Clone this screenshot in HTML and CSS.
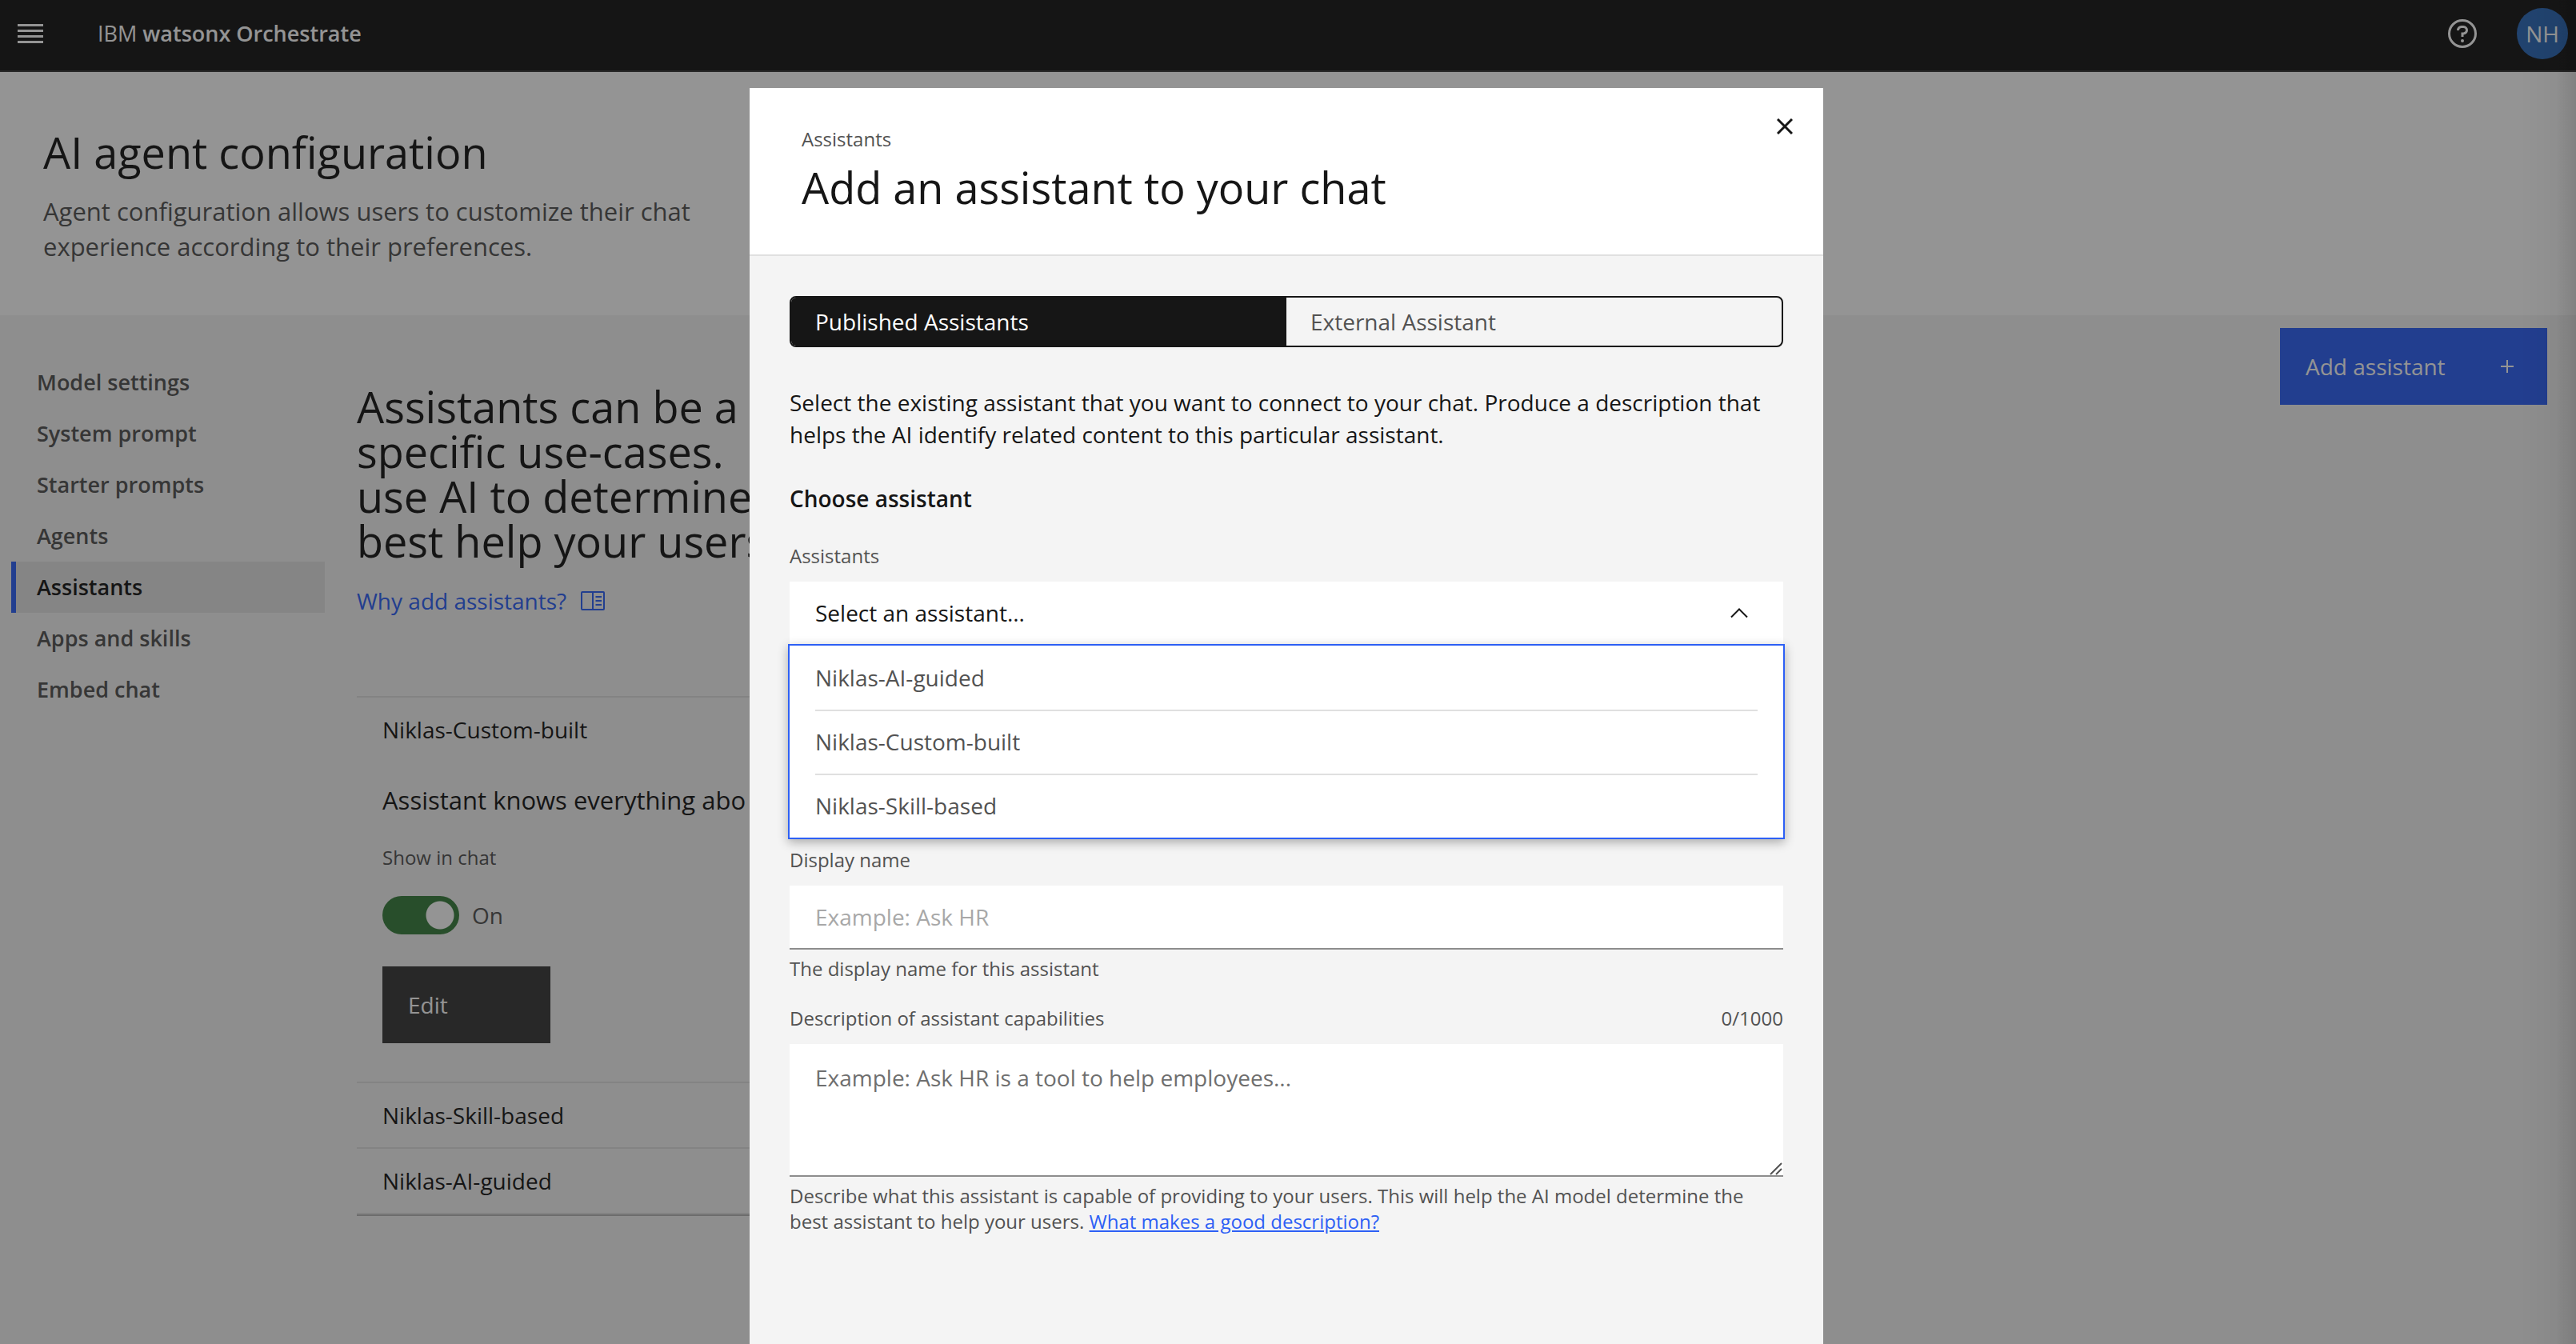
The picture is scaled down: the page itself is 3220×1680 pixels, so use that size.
FILE: index.html
```
<!DOCTYPE html>
<html lang="en">
<head>
<meta charset="utf-8">
<meta name="viewport" content="width=device-width, initial-scale=1">
<title>IBM watsonx Orchestrate</title>
<link rel="stylesheet" href="styles.css">
</head>
<body>
<header class="topbar">
  <button class="icon-button" type="button" aria-label="Open menu">
    <svg width="32" height="24" viewBox="0 0 32 24" fill="currentColor" aria-hidden="true"><path d="M0 0h32v3H0zM0 7h32v3H0zM0 14h32v3H0zM0 21h32v3H0z"/></svg>
  </button>
  <p class="brand">IBM <strong>watsonx Orchestrate</strong></p>
  <button class="icon-button help" type="button" aria-label="Help">
    <svg width="36" height="36" viewBox="0 0 36 36" fill="none" stroke="currentColor" stroke-width="3" aria-hidden="true"><circle cx="18" cy="18" r="16.5"/><path d="M12.5 14v-.6A4.2 4.2 0 0 1 16.700 9.500h2.600a4.200 4.200 0 0 1 4.200 4.200a4.200 4.200 0 0 1-4.200 4.200H18v4"/><circle cx="18" cy="27" r="2" fill="currentColor" stroke="none"/></svg>
  </button>
  <button class="avatar" type="button">NH</button>
</header>

<section class="hero">
  <h1 class="display">AI agent configuration</h1>
  <p class="hero-text">Agent configuration allows users to customize their chat experience according to their preferences.</p>
</section>

<div class="workspace">
  <nav class="sidenav" aria-label="Agent configuration">
    <a class="sidenav-link" href="#model">Model settings</a>
    <a class="sidenav-link" href="#system">System prompt</a>
    <a class="sidenav-link" href="#starter">Starter prompts</a>
    <a class="sidenav-link" href="#agents">Agents</a>
    <a class="sidenav-link active" href="#assistants" aria-current="page">Assistants</a>
    <a class="sidenav-link" href="#apps">Apps and skills</a>
    <a class="sidenav-link" href="#embed">Embed chat</a>
  </nav>

  <main class="content">
    <h2 class="display lead">Assistants can be a<br>specific use-cases.<br>use AI to determine<br>best help your users</h2>
    <a class="why" href="#why">Why add assistants?
      <svg width="30" height="24" viewBox="0 0 30 24" fill="none" stroke="currentColor" stroke-width="2" aria-hidden="true"><rect x="1" y="1" width="28" height="22" rx="1"/><path d="M15 1v22M18.500 7H26M18.500 12H26M18.500 17H26"/></svg>
    </a>

    <div class="accordion">
      <section class="accordion-item">
        <button class="accordion-title" type="button" aria-expanded="true">Niklas-Custom-built</button>
        <div class="panel">
          <p class="panel-text">Assistant knows everything abo</p>
          <label class="label" for="show">Show in chat</label>
          <div class="switch-row">
            <input class="switch" id="show" type="checkbox" role="switch" checked>
            <span>On</span>
          </div>
          <button class="edit" type="button">Edit</button>
        </div>
      </section>
      <section class="accordion-item">
        <button class="accordion-title" type="button" aria-expanded="false">Niklas-Skill-based</button>
      </section>
      <section class="accordion-item">
        <button class="accordion-title" type="button" aria-expanded="false">Niklas-AI-guided</button>
      </section>
    </div>
  </main>

  <button class="add" type="button">Add assistant
    <svg width="16" height="16" viewBox="0 0 16 16" stroke="currentColor" stroke-width="2" aria-hidden="true"><path d="M8 0v16M0 8h16"/></svg>
  </button>
</div>

<div class="backdrop">
  <div class="modal" role="dialog" aria-modal="true" aria-labelledby="modal-title">
    <header class="modal-header">
      <div>
        <p class="label">Assistants</p>
        <h2 class="display modal-title" id="modal-title">Add an assistant to your chat</h2>
      </div>
      <button class="close" type="button" aria-label="Close">
        <svg width="20" height="20" viewBox="0 0 20 20" stroke="currentColor" stroke-width="3" aria-hidden="true"><path d="M1 1l18 18M19 1L1 19"/></svg>
      </button>
    </header>

    <form class="modal-body">
      <div class="switcher" role="tablist">
        <button class="tab selected" type="button" role="tab" aria-selected="true">Published Assistants</button>
        <button class="tab" type="button" role="tab" aria-selected="false">External Assistant</button>
      </div>

      <p class="intro">Select the existing assistant that you want to connect to your chat. Produce a description that helps the AI identify related content to this particular assistant.</p>

      <h3 class="section-title">Choose assistant</h3>

      <label class="label" for="assistant">Assistants</label>
      <button class="field dropdown" id="assistant" type="button" role="combobox" aria-haspopup="listbox" aria-expanded="true" aria-controls="assistant-list">Select an assistant...
        <svg width="22" height="14" viewBox="0 0 22 14" fill="none" stroke="currentColor" stroke-width="2" aria-hidden="true"><path d="M1 12.500L11 2.500l10 10"/></svg>
      </button>
      <ul class="menu" id="assistant-list" role="listbox">
        <li class="option" role="option">Niklas-AI-guided</li>
        <li class="option" role="option">Niklas-Custom-built</li>
        <li class="option" role="option">Niklas-Skill-based</li>
      </ul>

      <label class="label" for="name">Display name</label>
      <input class="field text" id="name" type="text" placeholder="Example: Ask HR">
      <p class="helper">The display name for this assistant</p>

      <div class="label-row">
        <label class="label" for="description">Description of assistant capabilities</label>
        <span class="label">0/1000</span>
      </div>
      <div class="area-wrap">
        <textarea class="field area" id="description" placeholder="Example: Ask HR is a tool to help employees..."></textarea>
        <svg class="grip" width="16" height="16" viewBox="0 0 16 16" stroke="currentColor" stroke-width="2" aria-hidden="true"><path d="M1 15L15 1M8 15l7-7"/></svg>
      </div>
      <p class="helper">Describe what this assistant is capable of providing to your users. This will help the AI model determine the best assistant to help your users. <a class="link" href="#good">What makes a good description?</a></p>
    </form>
  </div>
</div>
</body>
</html>
```
FILE: styles.css
```
:root {
  --ink: #161616;
  --ink-2: #525252;
  --line: #e0e0e0;
  --layer: #f4f4f4;
  --blue: #2d60f5;
}

* { box-sizing: border-box; margin: 0; padding: 0; }

body {
  min-height: 100vh;
  background: var(--layer);
  color: var(--ink);
  font: 28px/40px "Open Sans", "Noto Sans", sans-serif;
}

button, input, textarea {
  border: 0;
  border-radius: 0;
  background: none;
  color: inherit;
  font: inherit;
  text-align: left;
}

a { color: var(--blue); text-decoration: none; }

svg { display: block; flex: none; }

.display { font-size: 54px; font-weight: 400; line-height: 64px; }

.label, .helper { color: var(--ink-2); font-size: 24px; line-height: 32px; }

/* Top bar */
.topbar {
  display: flex;
  align-items: center;
  height: 90px;
  padding: 0 10px 4px 22px;
  border-bottom: 2px solid #393939;
  background: var(--ink);
  color: #fff;
}

.icon-button { display: flex; }
.brand { flex: 1; padding-left: 68px; font-size: 27px; }
.brand strong { font-weight: 600; }
.help { margin-right: 50px; }

.avatar {
  width: 64px;
  height: 64px;
  border-radius: 50%;
  background: #2b6abb;
  text-align: center;
}

/* Page heading */
.hero { padding: 68px 54px 64px; background: #fff; }

.hero-text {
  max-width: 860px;
  margin-top: 20px;
  color: var(--ink-2);
  font-size: 31px;
  line-height: 44px;
}

/* Navigation and content */
.workspace { display: flex; align-items: flex-start; padding: 16px 36px 0 14px; }

.sidenav { flex: none; width: 392px; padding-top: 36px; }

.sidenav-link {
  display: block;
  padding: 12px 26px;
  border-left: 6px solid transparent;
  color: var(--ink-2);
  font-size: 27px;
  font-weight: 600;
}

.sidenav-link.active { border-color: var(--blue); background: #e3e3e3; color: var(--ink); }

.content { flex: 0 1 1600px; margin-right: auto; padding: 70px 0 0 40px; }

.lead { line-height: 56px; }

.why { display: flex; align-items: center; gap: 18px; margin-top: 27px; }

.add {
  display: flex;
  flex: none;
  align-items: center;
  justify-content: space-between;
  width: 334px;
  height: 96px;
  padding: 0 42px 0 32px;
  background: var(--blue);
  color: #fff;
}

.accordion { margin-top: 99px; border-bottom: 2px solid #b8b8b8; }
.accordion-item { border-top: 2px solid var(--line); }
.accordion-item:last-child { border-bottom: 2px solid var(--line); }
.accordion-title { display: block; width: 100%; padding: 20px 32px; }
.panel { display: flex; flex-direction: column; align-items: flex-start; padding: 24px 32px 48px; }
.panel-text { margin-bottom: 32px; font-size: 31px; line-height: 48px; }
.switch-row { display: flex; align-items: center; gap: 16px; margin: 32px 0 40px; color: var(--ink-2); }

.switch {
  width: 96px;
  height: 48px;
  border-radius: 24px;
  background: radial-gradient(circle at 72px 24px, #fff 17px, transparent 18px) #397e3d;
  appearance: none;
}

.edit { width: 210px; height: 96px; padding: 0 32px; background: #393939; color: #fff; }

/* Dialog */
.backdrop {
  position: fixed;
  inset: 0;
  display: flex;
  justify-content: center;
  padding: 110px 4px 0 0;
  background:
    linear-gradient(to left, rgba(0, 0, 0, .13), rgba(0, 0, 0, .04) 24px, transparent) right / 70px 100% no-repeat,
    rgba(22, 22, 22, .46);
}

.modal { width: 1342px; background: var(--layer); overflow: hidden; }

.modal-header {
  display: flex;
  align-items: flex-start;
  justify-content: space-between;
  padding: 0 38px 52px 65px;
  border-bottom: 2px solid var(--line);
  background: #fff;
}

.modal-header .label { margin-top: 48px; }
.modal-title { margin-top: 12px; }
.close { margin-top: 38px; }

.modal-body { display: flex; flex-direction: column; padding: 50px; }

.switcher {
  display: grid;
  grid-template-columns: 1fr 1fr;
  height: 64px;
  border: 2px solid var(--ink);
  border-radius: 8px;
  overflow: hidden;
}

.tab { padding: 0 30px; color: var(--ink-2); }
.tab.selected { background: var(--ink); color: #fff; }

.intro { margin-top: 49px; }
.section-title { margin: 40px 0 36px; font-size: 28px; font-weight: 600; }

.field {
  width: 100%;
  height: 80px;
  margin-top: 16px;
  padding: 0 32px;
  border-bottom: 2px solid #8d8d8d;
  background: #fff;
}

.dropdown { display: flex; align-items: center; justify-content: space-between; padding-right: 44px; border-color: #fff; }
.text::placeholder { color: #a8a8a8; }

.menu {
  position: relative;
  margin: -2px -2px 10px;
  border: 2px solid var(--blue);
  background: #fff;
  box-shadow: 0 4px 12px rgba(0, 0, 0, .3);
  list-style: none;
}

.option { height: 80px; margin: 0 32px; padding: 20px 0; color: var(--ink-2); }
.option + .option { padding-top: 18px; border-top: 2px solid var(--line); }

.helper { margin-top: 8px; }
.label-row { display: flex; justify-content: space-between; margin-top: 30px; }

.area-wrap { position: relative; margin-top: 16px; }
.area { display: block; height: 166px; margin: 0; padding: 22px 32px; resize: none; }
.area::placeholder { color: #6f6f6f; }
.grip { position: absolute; right: 1px; bottom: 2px; color: var(--ink-2); }

.link { text-decoration: underline; }
```
